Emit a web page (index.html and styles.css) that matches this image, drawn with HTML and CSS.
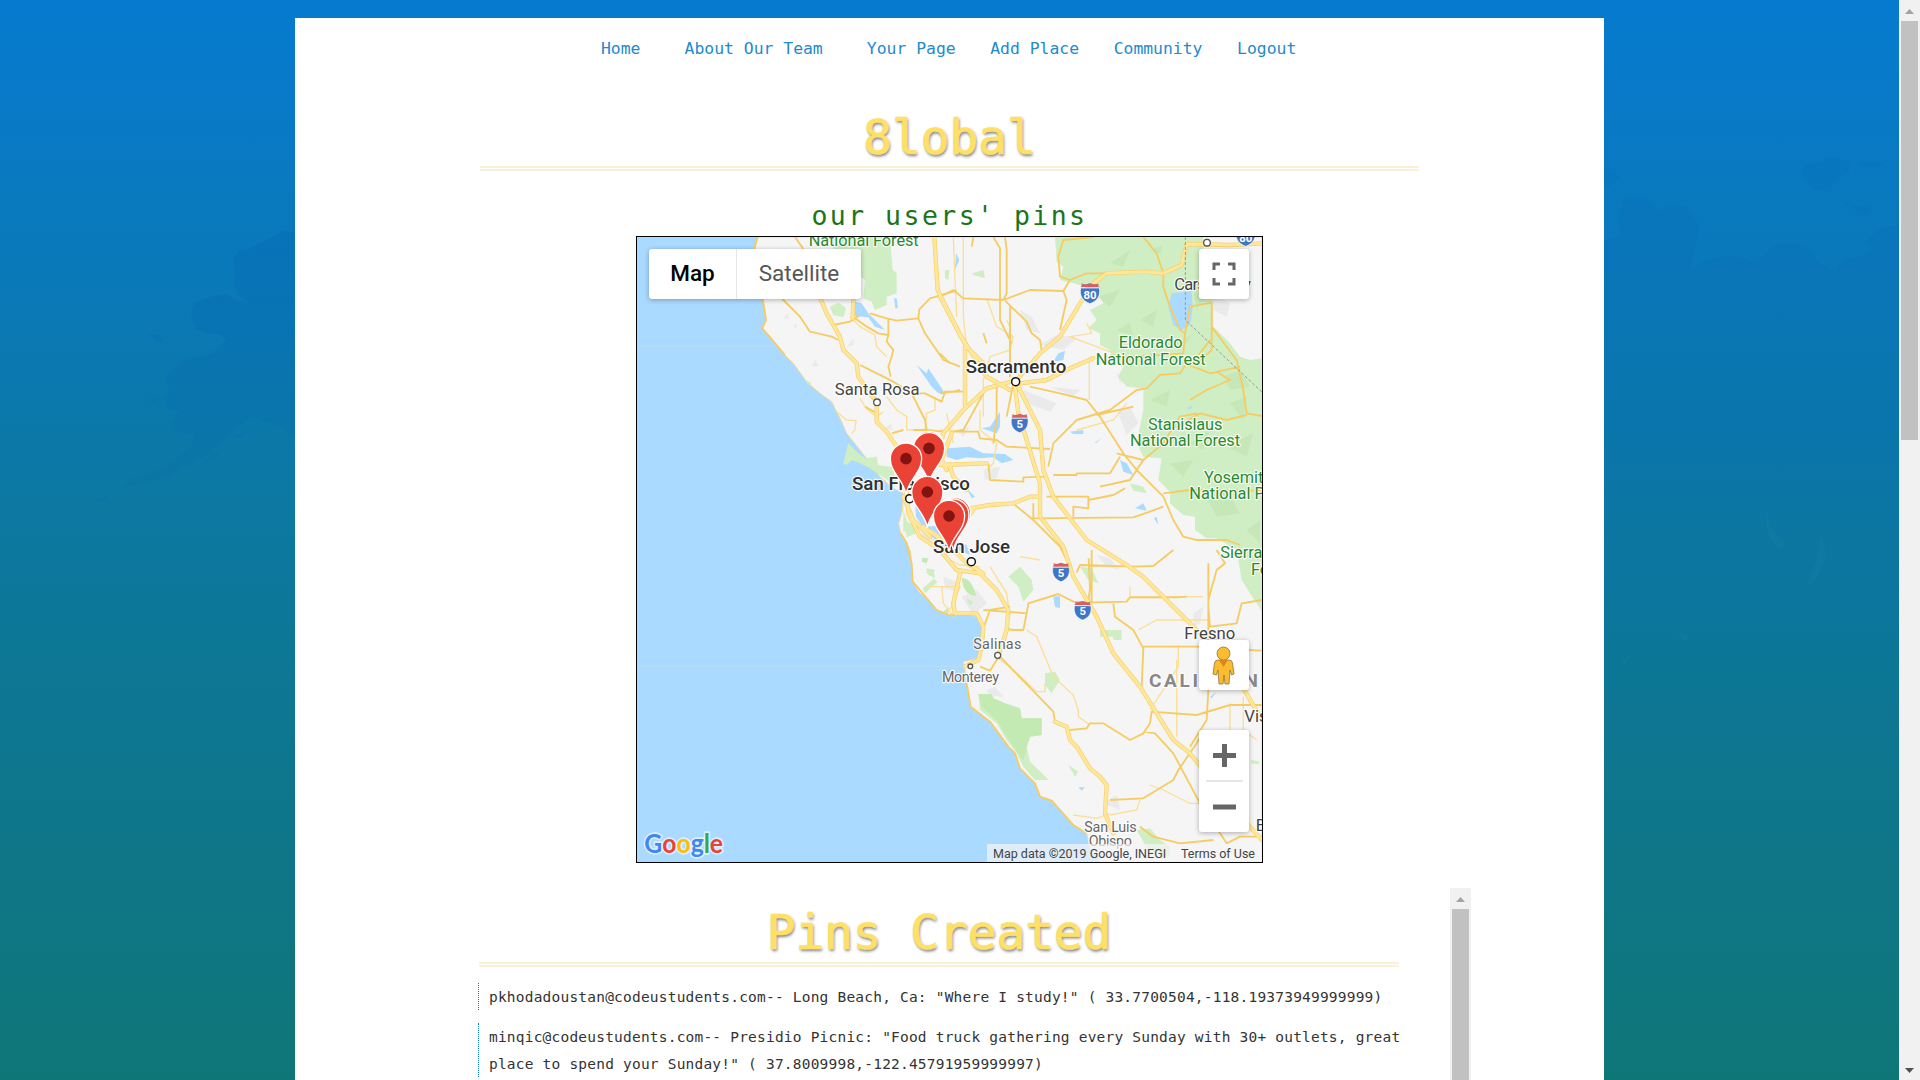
FILE: index.html
```html
<!DOCTYPE html>
<html lang="en">
<head>
<meta charset="utf-8">
<title>8lobal - Community</title>
<link rel="stylesheet" href="styles.css">
</head>
<body>
<div class="page">
  <svg class="backdrop" viewBox="0 0 1899 1080" aria-hidden="true">
    <defs>
      <linearGradient id="fade" x1="0" y1="0" x2="0" y2="1">
        <stop offset="0" stop-color="#0568b4" stop-opacity=".2"/>
        <stop offset=".4" stop-color="#0568b4" stop-opacity=".18"/>
        <stop offset="1" stop-color="#0568b4" stop-opacity="0"/>
      </linearGradient>
      <linearGradient id="fade-west" x1="0" y1="0" x2="0" y2="1">
        <stop offset="0" stop-color="#0568b4" stop-opacity=".38"/>
        <stop offset="1" stop-color="#0568a8" stop-opacity=".13"/>
      </linearGradient>
    </defs>
    <path fill="url(#fade-west)" d="M295 232L283 231L262 242L249 249L240 250L233 258L235 273L234 285L239 296L249 302L236 300L226 294L209 297L195 302L191 317L196 329L207 334L220 334L226 340L213 353L192 358L180 362L167 373L165 382L170 390L163 398L167 408L178 411L172 423L178 432L195 435L190 447L176 459L155 470L128 481L122 488L145 484L170 475L184 467L204 457L220 444L238 427L252 416L264 421L281 427L290 436L295 437ZM148 334L158 335L164 343L156 341ZM149 398L158 399L156 402L150 402ZM204 459L222 450L215 460L204 463ZM234 435L250 431L240 438ZM90 502L110 494L105 501Z"/>
    <path fill="url(#fade)" d="M1604 240L1622 235L1618 222L1622 200L1636 196L1652 202L1657 210L1670 204L1688 207L1699 225L1696 245L1690 270L1702 262L1716 257L1738 256L1756 262L1772 246L1790 243L1808 248L1818 262L1835 272L1842 260L1860 256L1874 250L1866 240L1878 230L1899 225V760H1604Z"/>
    <path fill="#0568b0" fill-opacity=".17" d="M1604 168L1614 170L1620 178L1610 186L1604 186ZM1803 165L1818 162L1832 158L1850 162L1849 172L1836 180L1829 191L1813 189L1802 179ZM1857 162L1884 162L1878 168L1863 168ZM1852 204L1872 208L1868 214L1856 211ZM1843 200L1850 203L1846 206Z"/>
    <path fill="#1682a8" fill-opacity=".25" d="M1821 536L1827 555L1816 580L1805 588L1814 568ZM1764 505L1772 528L1786 544L1779 550L1768 535ZM1676 628L1690 638L1683 642ZM1622 660L1630 655L1624 668Z"/>
  </svg>
  <div class="panel">
    <nav class="nav">
      <a class="nav-link">Home</a>
      <a class="nav-link wide">About Our Team</a>
      <a class="nav-link">Your Page</a>
      <a class="nav-link">Add Place</a>
      <a class="nav-link">Community</a>
      <a class="nav-link">Logout</a>
    </nav>
    <h1 class="title">8lobal</h1>
    <h2 class="subtitle">our users' pins</h2>
    <div class="map">
      <svg class="tiles" viewBox="21 21 1875 1875">
        <defs>
          <g id="shield">
            <path d="M-27 -28Q-14 -22 0 -29Q14 -22 27 -28Q22 -24 28 -16L-28 -16Q-22 -24 -27 -28Z" fill="#d65f5f"/>
            <path d="M-28 -14H28C32 6 25 24 0 33C-25 24 -32 6 -28 -14Z" fill="#3f76c6" stroke="#fff" stroke-width="2"/>
          </g>
          <g id="pin"><path d="M0 107C-7 62 -47 43 -47 0A47 47 0 0 1 47 0C47 43 7 62 0 107Z" fill="#ea4335" stroke="#fff" stroke-width="4"/><circle r="17.500" fill="#811411"/></g>
        </defs>
        <rect x="21" y="21" width="1875" height="1875" fill="#aadaff"/>
        <path d="M21 349H460M21 1309H1000" stroke="#bcdcf4" stroke-width="3"/>
        <path class="land" d="M383 21L375 57L398 207L405 240L408 270L397 295L425 325L465 375L490 400L530 455L570 490L605 515L620 545L635 575L650 610L690 660L720 700L750 740L790 775L820 790L818 840L806 880L812 910L830 940L842 965L846 1020L848 1055L866 1085L895 1110L920 1140L960 1156L1000 1148L1040 1160L1060 1190L1055 1250L1045 1285L1000 1295L1005 1320L1010 1360L1022 1430L1080 1475L1135 1550L1155 1570L1170 1615L1215 1660L1230 1700L1265 1712L1330 1785L1370 1810L1380 1855L1410 1896H1896V21Z"/>
        <g fill="#e6e6e6" opacity=".7">
          <path d="M460 265L475 250V268ZM490 290L500 280V295ZM545 410L555 388L565 408ZM652 350L670 325V345ZM765 595L785 580V600ZM725 95L760 75L750 100ZM1170 240L1205 260L1230 310L1190 300ZM1180 480L1230 500L1280 520L1260 545L1190 520ZM1460 540L1500 530L1525 580L1490 615ZM1060 720L1110 710L1100 745L1065 750ZM1280 315L1340 325L1300 360L1230 345ZM995 1100L1040 1080L1070 1120L1030 1155ZM940 1040L990 1060L980 1085L945 1075ZM1400 975L1440 985L1470 1020L1430 1010ZM1690 1150L1720 1130L1710 1180L1690 1190ZM1070 1380L1095 1370L1120 1400L1080 1398ZM1460 430L1500 440L1470 460ZM1260 470L1350 480L1330 500ZM980 600L1020 590L1000 620ZM1740 190L1800 220L1790 260L1750 240ZM1420 1720L1460 1695L1470 1740ZM860 830L900 900L930 940L880 930Z"/>
        </g>
        <g class="park">
          <path d="M600 21H780L788 120L800 130V190L770 200L770 225L735 240L725 215L700 205L705 150L640 100L610 60ZM600 230L625 218L648 235L640 262L610 255ZM655 640L680 665L705 685L740 680L745 705L790 712L800 770L765 745L720 715L690 700L665 690L650 705L640 700ZM525 450L545 458L535 465ZM820 870L850 885L858 910L830 922ZM945 120H958L955 150L945 145ZM820 840L840 900L820 905ZM888 1025L915 1035L910 1040L890 1030ZM890 1018L915 1020L908 1040ZM878 1075L912 1046L922 1056L885 1090ZM888 1015L910 1018L915 1045L895 1035ZM1026 130L1060 120L1065 145L1030 135Z"/>
          <path d="M1275 21L1280 95L1300 110L1290 150L1330 160L1400 180L1420 220L1380 240L1400 270L1375 295L1410 310V345L1440 360L1445 400L1480 410L1465 440L1490 470L1540 475V540L1520 640L1540 680L1595 685L1585 750L1620 785V820L1660 855L1695 860V900L1730 925H1760L1830 965L1825 990L1835 1050L1860 1090L1896 1145V385L1860 390L1830 380L1800 340L1750 290V220L1720 150V21Z"/>
          <path d="M1500 760L1540 770L1550 790L1510 782ZM1135 1040L1170 1010L1205 1050L1210 1080L1180 1115L1165 1070ZM1410 1200H1475V1230H1450V1220H1410ZM1045 1392L1085 1392L1090 1405L1125 1420L1170 1435L1175 1465H1235V1515L1200 1520L1190 1550L1200 1595L1257 1650L1215 1650L1180 1610L1160 1570L1130 1530L1100 1480L1050 1440ZM1245 1330L1275 1325L1290 1350L1265 1390L1245 1365ZM1315 1605L1345 1625L1335 1640ZM1520 1800L1560 1795L1590 1830L1620 1850V1880L1560 1870ZM1350 1010L1385 1015L1405 1060L1375 1050ZM1010 1105L1030 1115L1020 1130ZM1865 1590L1890 1595L1885 1602L1862 1600Z"/>
        </g>
        <path class="park-dark" d="M995 1045Q1020 1040 1037 1090V1098Q1000 1095 995 1045ZM1045 1392L1085 1392L1090 1405L1125 1420L1170 1435L1175 1465H1235V1515L1200 1520L1190 1550L1180 1590L1150 1550L1100 1470L1055 1430ZM877 983L895 985L890 1000L875 995ZM940 1145L957 1130L955 1150Z"/>
        <g fill="#bfe3ae" opacity=".55">
          <path d="M1440 100L1500 60L1480 110ZM1560 60L1600 45L1590 70ZM1400 200L1470 180L1440 230ZM1530 270L1580 240L1570 290ZM1640 340L1690 310L1660 350ZM1780 440L1830 420L1860 470L1800 480ZM1560 510L1620 480L1610 530ZM1680 640L1740 600L1720 660ZM1790 650L1870 610L1850 680ZM1620 700L1690 690L1660 740ZM1720 790L1790 780L1830 850L1760 860ZM1850 900L1890 870V940ZM1800 520L1850 500L1840 570ZM1690 180L1720 210L1700 240ZM1460 300L1500 280L1510 320Z"/>
        </g>
        <path class="water" d="M1625 190L1685 183L1688 235L1680 285L1655 300L1630 285L1615 230ZM675 215L695 220L715 250L765 300L735 290L715 262L674 258ZM860 405L890 430L895 415L915 445L945 490H925L905 470ZM792 205H800L804 235H796ZM840 780L865 790L890 880L925 925L970 940L990 970L950 960L885 900L858 860L855 810ZM895 890L930 885L965 925L1010 945L1020 975L985 960ZM950 655L1020 650L1060 670L1125 672L1150 690L1115 700L1090 682L1050 685L1010 682L980 690L950 680ZM1055 595L1080 590L1110 545V590L1100 610ZM1270 395L1285 370L1305 362L1300 390ZM1470 690L1490 700L1510 735L1480 725ZM1515 835L1540 820L1550 842ZM1572 865L1580 860L1585 885ZM1320 605L1360 600V612H1330ZM1270 1100L1290 1098V1135L1275 1130ZM1345 1672H1365L1355 1682ZM1740 1400L1760 1385L1745 1405ZM1670 535L1690 525L1680 538ZM1392 640L1415 625L1400 638ZM1010 775L1025 805L1035 800ZM978 70L988 90L975 120Z"/>
        <g class="minor">
          <path d="M620 545L650 570L678 572L675 600L665 610M690 505L705 530L725 550L740 560L760 545M770 500L800 540L830 560V600M830 600L885 598L890 550L915 540V500M660 260L690 290L735 315L740 350L770 380M1070 205L1100 290L1150 320L1140 360L1080 380L1060 450V560M1130 270L1140 290V440M1370 280L1385 310L1320 320L1400 350L1480 380M1378 390V510M930 600L1005 605M1050 540V600L1100 640M1340 600L1450 570L1490 520M1100 640L1090 700L1070 720"/>
          <path d="M895 1070L935 1070H990L960 1140M935 1070L940 1120L970 1160M1080 1010L1130 1090L1140 1160M1190 1200L1220 1220L1270 1340L1330 1395L1345 1440V1460L1380 1485M1100 1280L1150 1320L1220 1385L1245 1385V1360M1330 1755L1400 1765L1440 1750M1645 1245V1310L1560 1440M1500 1070V1100H1720M1525 1200L1580 1170H1735M1640 1290V1520M1800 1420V1520M1840 1400V1500L1880 1530M1560 1665L1600 1680L1680 1720H1780M1530 1710L1520 1740L1440 1755M940 980L990 1005L1050 1010M1170 980L1230 990M980 260L975 150L970 21M950 550L970 640M1000 21V260L1010 350"/>
        </g>
        <g class="road">
          <path d="M383 21L372 57M398 207L408 270L397 295L465 375M457 207L510 260L540 305L605 320L625 330M495 21L520 57M610 285L660 275L690 255M675 265L710 290L745 310L775 315L770 335L790 360L785 380L775 410L782 440M775 265V315M720 250L770 265L800 272L865 265L868 238L900 205L980 182M865 265L885 310L940 390L990 410M690 405L730 425L790 455L845 490L885 490L935 515L945 485L1000 485M845 490L885 570L890 600M740 550L705 530M785 610L820 600M850 600L890 600L940 605"/>
          <path d="M930 200L970 180L1000 205L1120 210M1030 21L1025 50M1090 21L1110 55V270L1130 310L1145 340M1125 21L1130 60V190L1120 210L1200 180L1300 183L1320 150M1125 212L1190 275L1205 310L1230 330L1235 360M1140 230V440M1300 183L1310 210L1290 300M1390 21L1300 30L1285 80L1290 140L1320 150M1320 150L1370 130L1430 130M1540 21L1580 70L1600 130M1600 130V170L1620 230L1650 300L1665 310L1660 370M1745 218L1680 230L1665 310M1745 218V360L1690 410L1740 430L1830 410M1745 290L1820 390L1840 480L1850 550L1896 558M930 370L960 400M1060 310L1070 340M1660 370L1600 375L1480 380M1670 400L1650 430L1590 435L1550 475L1520 480L1440 540L1340 570L1270 640L1255 710M1700 550L1650 560L1600 640L1540 690L1520 720L1500 750L1410 770M1200 470L1290 490L1370 510L1410 560L1480 670L1520 720L1600 800L1630 870L1660 920L1700 930L1790 930L1830 945M970 605L1045 605L1050 625L1100 630L1130 650L1260 657M1850 555L1790 570L1710 550L1620 600M1400 555L1510 530M1760 425L1800 450L1730 480L1680 510M1250 800H1375V810L1450 795L1485 775M1375 800V835L1330 830V860M1200 865L1510 862L1545 850L1600 830M1075 700L1080 750L1180 755V742L1250 740M1270 735L1340 735V730H1440L1470 680M1460 670L1540 690M1600 790L1680 780L1896 782M1210 870L1290 950L1310 990M1155 825L1210 870V820M1100 460V560L1090 640M1060 490L1000 600L970 605M930 490L970 485L990 480M1150 460L1140 510L1130 560M1680 410L1740 330"/>
          <path d="M812 910L830 940L845 1000L848 1055L920 1140L960 1156L1000 1148M1060 1195L1080 1140L1140 1130M1060 1140L1190 1150L1195 1120L1285 1092L1330 1115L1385 1117L1490 1115L1500 1102H1640L1670 1100M1375 1117L1380 1075L1376 985M1385 1115L1385 960M1340 1028L1350 1005L1510 1010L1570 1008L1630 960M1190 1150L1180 1200H1150L1130 1197M1050 1310L1080 1322L1100 1290L1110 1280L1270 1445L1275 1475L1310 1490M1010 1360L1022 1430L1080 1475L1135 1550L1155 1570L1170 1615L1215 1660L1230 1700L1265 1712L1330 1785L1370 1810M1320 1500L1370 1495L1380 1480L1420 1480L1500 1530L1540 1510L1560 1480L1565 1445L1700 1455L1800 1425L1896 1425M1540 1505L1575 1510L1630 1570L1710 1720M1700 1540L1645 1620L1630 1650L1540 1705L1440 1710M1450 1120L1455 1160L1510 1200L1540 1255L1535 1370M1540 1250H1720M1735 1000V1270M1735 1380L1730 1470L1680 1550M1760 960L1785 1000L1760 1020L1735 1110V1130L1740 1190L1820 1180L1835 1120L1896 1110M1530 1790L1570 1820L1650 1840L1750 1830M1770 1810L1790 1840L1830 1820H1896M1850 1260L1896 1262M1700 1540L1720 1500M1710 1720L1790 1840"/>
        </g>
        <g class="highway-edge"><use href="#highways"/></g>
        <g class="highway">
          <g id="highways">
            <path d="M572 207L590 250L630 320L640 360L680 400L685 440L720 490L740 515V575L770 605L800 650L818 680L830 790M913 21L923 180L990 315L1070 440L1140 480M668 265L670 207"/>
            <path d="M930 200L1010 350L1060 400M1005 350V530M1896 40L1800 45L1670 42L1655 105L1600 130L1540 125L1430 130L1390 160L1350 220L1290 320L1230 370L1160 450L1070 475L1000 540L940 610L930 650M1155 470L1165 550L1190 630L1230 760V860L1300 950L1330 1040L1400 1160L1450 1270L1530 1370L1630 1530L1680 1570L1720 1620L1790 1710M1165 470L1230 600L1240 720L1270 800L1370 930L1490 1005L1540 1040L1700 1200L1760 1270M1170 460L1250 450L1320 415L1390 385M830 790L835 850L870 920L930 960L980 1020L1050 1030L1100 1080L1135 1140L1130 1200L1105 1280M930 700L960 710L970 740L1010 780M930 705L1070 700M1020 835L1080 825L1150 820L1200 800L1230 800M880 890L950 940L1010 1000L1060 1030M820 800L850 870L900 920M990 1030L970 1120L975 1150L1040 1150L1060 1190L1055 1250L1045 1290L1005 1309M1275 1475L1310 1490L1320 1530L1340 1550L1380 1615L1410 1640L1430 1665L1425 1750L1450 1810M965 610L935 690L950 720M985 900L1000 880L1030 840M1840 1375L1896 1470M1850 1780L1896 1830"/>
          </g>
        </g>
        <path d="M1666 21V270L1900 490" fill="none" stroke="#999" stroke-width="3" stroke-dasharray="9 6"/>
        <g class="places">
          <circle cx="741" cy="517" r="10"/><circle cx="1157" cy="455" r="12" class="city"/><circle cx="839" cy="806" r="12" class="city"/><circle cx="1024" cy="995" r="12" class="city"/><circle cx="1103" cy="1276" r="9"/><circle cx="1021" cy="1309" r="7"/><circle cx="1731" cy="38" r="10"/>
        </g>
        <g class="label forest">
          <text x="536" y="48" textLength="330">National Forest</text>
          <text x="1466" y="355" textLength="192">Eldorado</text><text x="1397" y="404" textLength="330">National Forest</text>
          <text x="1554" y="599" textLength="223">Stanislaus</text><text x="1500" y="648" textLength="330">National Forest</text>
          <text x="1722" y="759">Yosemite</text><text x="1678" y="807">National Park</text>
          <text x="1771" y="985">Sierra</text><text x="1863" y="1034">Forest</text>
        </g>
        <g class="label town">
          <text x="614" y="495" textLength="255">Santa Rosa</text><text x="1633" y="180" textLength="230">Carson City</text>
          <text x="1663" y="1226" textLength="153">Fresno</text><text x="1843" y="1475">Visalia</text><text x="1877" y="1802">Bakersfield</text>
        </g>
        <g class="label soft">
          <text x="1030" y="1256" textLength="144">Salinas</text><text x="936" y="1356" textLength="171">Monterey</text>
          <text x="1363" y="1806" textLength="157">San Luis</text><text x="1376" y="1847" textLength="130">Obispo</text>
        </g>
        <g class="label metro">
          <text x="1007" y="428" textLength="302" lengthAdjust="spacingAndGlyphs">Sacramento</text><text x="666" y="780" textLength="354" lengthAdjust="spacingAndGlyphs">San Francisco</text><text x="909" y="969" textLength="231" lengthAdjust="spacingAndGlyphs">San Jose</text>
        </g>
        <text class="label state" x="1557" y="1370">CALIFORNIA</text>
        <use href="#shield" x="1380" y="188"/><use href="#shield" x="1847" y="16"/><use href="#shield" transform="translate(1169 578) scale(.87 .92)"/><use href="#shield" transform="translate(1293 1025) scale(.87 .92)"/><use href="#shield" transform="translate(1358 1140) scale(.87 .92)"/>
        <g class="route"><text x="1380" y="206">80</text><text x="1847" y="35">80</text><text x="1169" y="594">5</text><text x="1293" y="1040">5</text><text x="1358" y="1154">5</text></g>
        <use href="#pin" x="897" y="651"/><use href="#pin" x="897" y="655"/><use href="#pin" x="828" y="686"/><use href="#pin" x="975" y="850"/><use href="#pin" x="892" y="786"/><use href="#pin" x="970" y="854"/><use href="#pin" x="957" y="858"/>
        <text class="logo" x="43" y="1870" textLength="236" lengthAdjust="spacingAndGlyphs"><tspan fill="#4285f4">G</tspan><tspan fill="#ea4335">o</tspan><tspan fill="#fbbc05">o</tspan><tspan fill="#4285f4">g</tspan><tspan fill="#34a853">l</tspan><tspan fill="#ea4335">e</tspan></text>
      </svg>
      <div class="map-types"><button class="map-type selected">Map</button><button class="map-type">Satellite</button></div>
      <div class="control fullscreen"><svg width="24" height="24" viewBox="0 0 24 24"><path d="M2 8V2H8M16 2H22V8M22 16V22H16M8 22H2V16" fill="none" stroke="#666" stroke-width="3"/></svg></div>
      <div class="control pegman"><svg width="24" height="40" viewBox="0 0 24 40"><g stroke="#8d7440" stroke-width=".8"><path d="M6 14Q3 14 2.500 17L1 28L4.500 29L6 24L7 38H11L12 29L13 38H17L18 24L19.500 29L22 28L20.500 17Q20 14 17 14Z" fill="#fbbc2f"/><circle cx="11.500" cy="7.500" r="6.500" fill="#fbbc2f"/></g><path d="M7 14H16L11.500 21Z" fill="#e28222"/></svg></div>
      <div class="control zoom"><svg width="50" height="102" viewBox="0 0 50 102"><path d="M14 25.500H37M25.500 14V37M14 77H37" stroke="#666" stroke-width="5"/><path d="M7 51H44" stroke="#e6e6e6" stroke-width="2"/></svg></div>
      <div class="credit"><span>Map data ©2019 Google, INEGI</span><span>Terms of Use</span></div>
    </div>
    <div class="feed">
      <div class="feed-body">
        <h1 class="title">Pins Created</h1>
        <p class="entry">pkhodadoustan@codeustudents.com-- Long Beach, Ca: "Where I study!" ( 33.7700504,-118.19373949999999)</p>
        <p class="entry">minqic@codeustudents.com-- Presidio Picnic: "Food truck gathering every Sunday with 30+ outlets, great<br>place to spend your Sunday!" ( 37.8009998,-122.45791959999997)</p>
      </div>
      <div class="scrollbar"><i class="arrow up"></i><i class="thumb"></i></div>
    </div>
  </div>
</div>
<div class="scrollbar"><i class="arrow up"></i><i class="thumb window-thumb"></i><i class="arrow down"></i></div>
</body>
</html>
```
FILE: styles.css
```css
* { box-sizing: border-box; }

body {
  display: flex;
  height: 1080px;
  margin: 0;
  overflow: hidden;
  color: #333;
  font-family: "DejaVu Sans Mono", monospace;
}

.page {
  position: relative;
  flex: 1;
  height: 1080px;
  overflow: hidden;
  padding-top: 18px;
  background: linear-gradient(#067acf 0%, #0a79b9 25%, #0d789f 50%, #0e768b 75%, #0f7678 100%);
}

.backdrop { position: absolute; top: 0; left: 0; width: 1899px; height: 1080px; }

.panel {
  position: relative;
  width: 1309px;
  height: 1062px;
  margin: 0 auto;
  overflow: hidden;
  background: #fff;
}

.nav {
  display: flex;
  gap: 34.6px;
  height: 62px;
  padding-left: 306px;
  color: #238acb;
  font-size: 16.400px;
  line-height: 62px;
  white-space: nowrap;
}
.wide { padding: 0 9.500px; }

.title {
  width: 939px;
  height: 73px;
  margin: 18px auto 0 185px;
  border-bottom: 5px double #f9f0d6;
  color: #ffe066;
  font-size: 47.700px;
  font-weight: 400;
  line-height: 79px;
  text-align: center;
  text-shadow: 1px 2px 3px rgba(0, 0, 0, .5);
  -webkit-text-stroke: .7px #ffe066;
}

.subtitle {
  height: 65px;
  margin: 0;
  color: #1a751a;
  font-size: 26.500px;
  font-weight: 400;
  letter-spacing: 2.450px;
  line-height: 90px;
  text-align: center;
}

.map {
  position: relative;
  width: 627px;
  height: 627px;
  margin: 0 auto;
  overflow: hidden;
  border: 1px solid #000;
  font-family: Roboto, Arial, sans-serif;
}
.tiles { display: block; width: 625px; height: 625px; }
.land { fill: #f5f5f5; stroke: #f4dc9c; stroke-width: 3; }
.park { fill: #cfeec3; }
.park-dark { fill: #c3eab2; }
.water { fill: #aadaff; }
.minor { fill: none; stroke: #fbdf96; stroke-width: 4; }
.road { fill: none; stroke: #f6cc62; stroke-width: 5.500; stroke-linejoin: round; }
.highway, .highway-edge { fill: none; stroke-linejoin: round; stroke-linecap: round; }
.highway-edge { stroke: #f7d06c; stroke-width: 13; }
.highway { stroke: #ffe799; stroke-width: 9; }
.places { fill: #fff; stroke: #555; stroke-width: 4; }
.city { stroke: #111; stroke-width: 4.500; }
.label { paint-order: stroke; stroke: #fff; stroke-width: 7px; stroke-linejoin: round; stroke-opacity: .85; }
.forest { fill: #2a8a2f; font-size: 49px; }
.town { fill: #444; font-size: 50px; }
.soft { fill: #666; font-size: 43px; }
.metro { fill: #303030; font-size: 54px; font-weight: 500; }
.state { fill: #888; font-size: 57px; font-weight: 700; letter-spacing: 8px; }
.route { fill: #fff; font-size: 34px; font-weight: 700; text-anchor: middle; }
.logo { font-family: Lato, sans-serif; font-size: 78px; font-weight: 700; paint-order: stroke; stroke: #fff; stroke-opacity: .6; stroke-width: 10px; stroke-linejoin: round; }

.map-types, .control {
  position: absolute;
  border-radius: 3px;
  background: #fff;
  box-shadow: 0 1px 5px rgba(0, 0, 0, .3);
}
.map-types { top: 12px; left: 12px; display: flex; width: 212px; height: 50px; }
.map-type {
  flex: 1;
  padding: 0;
  border: 0;
  border-left: 1px solid #e6e6e6;
  background: none;
  color: #565656;
  font: 22.500px/46px Roboto, Arial, sans-serif;
}
.map-type { padding-bottom: 2px; }
.selected { flex: 0 0 87px; border: 0; color: #000; font-weight: 500; }
.control { right: 13px; display: flex; align-items: center; justify-content: center; width: 50px; height: 50px; }
.fullscreen { top: 12px; }
.pegman { top: 403px; }
.pegman svg { position: relative; top: 1px; }
.zoom { top: 493px; height: 102px; }
.credit {
  position: absolute;
  right: 0;
  bottom: 0;
  display: flex;
  justify-content: space-between;
  width: 275px;
  height: 18px;
  padding: 0 7px 0 6px;
  background: rgba(245, 245, 245, .7);
  color: #444;
  font-size: 12.500px;
  line-height: 20px;
}

.feed { display: flex; width: 1043px; height: 192px; margin: 25px 0 0 133px; }
.feed-body { flex: 1; padding: 0 51px; overflow: hidden; }
.feed .title { width: 920px; height: 79px; margin: 0 0 16px; line-height: 89px; }
.entry {
  min-height: 27px;
  margin: 0 0 13px -1px;
  padding-left: 10px;
  border-left: 1px dotted #0b7cc4;
  font-size: 14.500px;
  letter-spacing: .205px;
  line-height: 29px;
  height: 27px;
  white-space: nowrap;
}
.entry:last-child { height: 54px; line-height: 27px; padding-top: 1px; }

.scrollbar {
  display: flex;
  flex: 0 0 21px;
  flex-direction: column;
  align-items: center;
  background: #f1f1f1;
}
.arrow { width: 9px; height: 5px; margin: 9px 0 7px; }
.up { background: #a3a3a3; clip-path: polygon(50% 0, 100% 100%, 0 100%); }
.down { margin-top: auto; background: #505050; clip-path: polygon(0 0, 100% 0, 50% 100%); }
.thumb { flex: 1; width: 17px; background: #c1c1c1; }
.window-thumb { flex: 0 0 419px; }
```
